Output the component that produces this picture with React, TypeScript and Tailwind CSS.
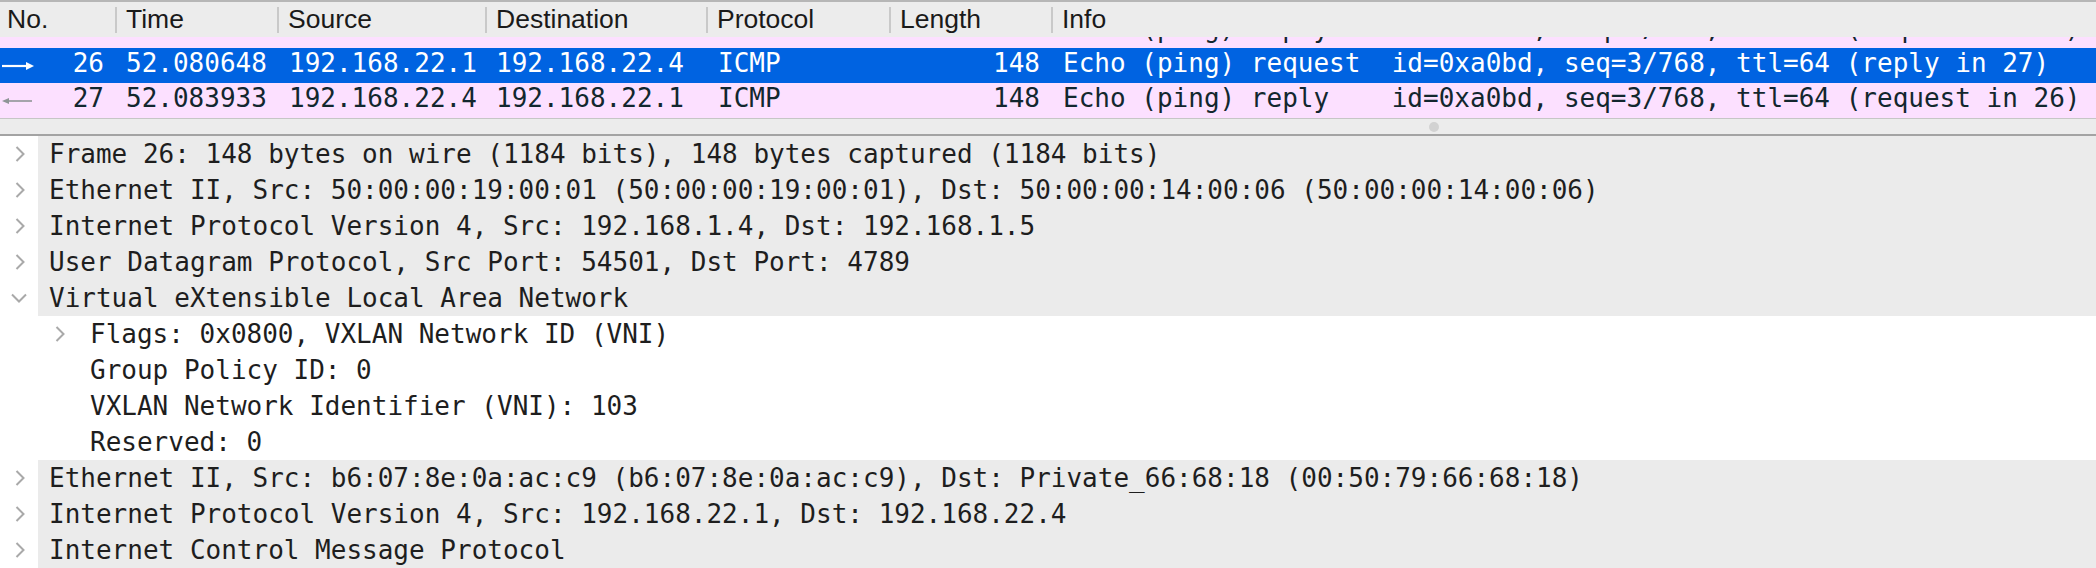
import React from "react";

const mono = "font-['DejaVu_Sans_Mono','Liberation_Mono',monospace] text-[26px] whitespace-pre";

type Packet = {
  no: string;
  time: string;
  src: string;
  dst: string;
  proto: string;
  len: string;
  info: string;
  dir?: "out" | "in";
  selected?: boolean;
};

const packets: Packet[] = [
  {
    no: "25",
    time: "52.079872",
    src: "192.168.22.4",
    dst: "192.168.22.1",
    proto: "ICMP",
    len: "148",
    info: "Echo (ping) reply    id=0xa0bd, seq=2/512, ttl=64 (request in 24)",
  },
  {
    no: "26",
    time: "52.080648",
    src: "192.168.22.1",
    dst: "192.168.22.4",
    proto: "ICMP",
    len: "148",
    info: "Echo (ping) request  id=0xa0bd, seq=3/768, ttl=64 (reply in 27)",
    dir: "out",
    selected: true,
  },
  {
    no: "27",
    time: "52.083933",
    src: "192.168.22.4",
    dst: "192.168.22.1",
    proto: "ICMP",
    len: "148",
    info: "Echo (ping) reply    id=0xa0bd, seq=3/768, ttl=64 (request in 26)",
    dir: "in",
  },
];

type Detail = {
  text: string;
  level: 0 | 1;
  chevron?: "closed" | "open";
};

const details: Detail[] = [
  { text: "Frame 26: 148 bytes on wire (1184 bits), 148 bytes captured (1184 bits)", level: 0, chevron: "closed" },
  { text: "Ethernet II, Src: 50:00:00:19:00:01 (50:00:00:19:00:01), Dst: 50:00:00:14:00:06 (50:00:00:14:00:06)", level: 0, chevron: "closed" },
  { text: "Internet Protocol Version 4, Src: 192.168.1.4, Dst: 192.168.1.5", level: 0, chevron: "closed" },
  { text: "User Datagram Protocol, Src Port: 54501, Dst Port: 4789", level: 0, chevron: "closed" },
  { text: "Virtual eXtensible Local Area Network", level: 0, chevron: "open" },
  { text: "Flags: 0x0800, VXLAN Network ID (VNI)", level: 1, chevron: "closed" },
  { text: "Group Policy ID: 0", level: 1 },
  { text: "VXLAN Network Identifier (VNI): 103", level: 1 },
  { text: "Reserved: 0", level: 1 },
  { text: "Ethernet II, Src: b6:07:8e:0a:ac:c9 (b6:07:8e:0a:ac:c9), Dst: Private_66:68:18 (00:50:79:66:68:18)", level: 0, chevron: "closed" },
  { text: "Internet Protocol Version 4, Src: 192.168.22.1, Dst: 192.168.22.4", level: 0, chevron: "closed" },
  { text: "Internet Control Message Protocol", level: 0, chevron: "closed" },
];

function DirArrow({ dir }: { dir?: "out" | "in" }) {
  if (dir === "out") {
    return (
      <svg width="32" height="12" viewBox="0 0 32 12" className="shrink-0">
        <line x1="0" y1="6" x2="26" y2="6" stroke="#ffffff" strokeWidth="2.2" />
        <polygon points="24,2 32,6 24,10" fill="#ffffff" />
      </svg>
    );
  }
  if (dir === "in") {
    return (
      <svg width="30" height="12" viewBox="0 0 30 12" className="shrink-0">
        <line x1="4" y1="6" x2="30" y2="6" stroke="#8f9597" strokeWidth="1.6" />
        <polygon points="0,6 7,3 7,9" fill="#8f9597" />
      </svg>
    );
  }
  return <span className="w-[32px] shrink-0" />;
}

function Chevron({ open }: { open?: boolean }) {
  if (open) {
    return (
      <svg width="16" height="10" viewBox="0 0 16 10">
        <path d="M1 1.5 L8 8.5 L15 1.5" fill="none" stroke="#a9a9a9" strokeWidth="2" />
      </svg>
    );
  }
  return (
    <svg width="10" height="16" viewBox="0 0 10 16">
      <path d="M1.5 1 L8.5 8 L1.5 15" fill="none" stroke="#a9a9a9" strokeWidth="2" />
    </svg>
  );
}

function HeaderCell({ label, width, first }: { label: string; width?: string; first?: boolean }) {
  return (
    <div className={`flex items-center h-full ${width ?? "flex-1"}`}>
      {!first && <span className="w-[2px] h-[26px] bg-[#c9c9c9] shrink-0" />}
      <span className={first ? "pl-[7px]" : "pl-[9px]"}>{label}</span>
    </div>
  );
}

function PacketRow({ p }: { p: Packet }) {
  const tone = p.selected ? "bg-[#0063e1] text-white" : "bg-[#fce0ff] text-[#12272e]";
  return (
    <div className={`flex items-center h-[35px] pb-[5px] shrink-0 ${tone} ${mono}`}>
      <div className="w-[115px] flex items-center justify-between pl-[2px] pr-[11px]">
        <span className="pt-[5px] flex items-center">
          <DirArrow dir={p.dir} />
        </span>
        <span>{p.no}</span>
      </div>
      <div className="w-[162px] pl-[11px]">{p.time}</div>
      <div className="w-[208px] pl-[12px]">{p.src}</div>
      <div className="w-[221px] pl-[11px]">{p.dst}</div>
      <div className="w-[183px] pl-[12px]">{p.proto}</div>
      <div className="w-[162px] pr-[11px] text-right">{p.len}</div>
      <div className="flex-1 pl-[12px]">{p.info}</div>
    </div>
  );
}

function DetailRow({ d }: { d: Detail }) {
  if (d.level === 0) {
    return (
      <div className="flex h-[36px]">
        <div className={`w-[38px] flex items-center shrink-0 ${d.chevron === "open" ? "pl-[11px]" : "pl-[15px]"}`}>
          {d.chevron && <Chevron open={d.chevron === "open"} />}
        </div>
        <div className={`flex-1 flex items-center bg-[#ebebeb] pl-[11px] text-[#1e1e1e] ${mono}`}>{d.text}</div>
      </div>
    );
  }
  return (
    <div className="flex h-[36px] items-center pl-[55px]">
      <div className="w-[35px] flex items-center shrink-0">{d.chevron && <Chevron />}</div>
      <div className={`text-[#1e1e1e] ${mono}`}>{d.text}</div>
    </div>
  );
}

export default function App() {
  return (
    <div className="w-[2096px] h-[568px] overflow-hidden bg-white flex flex-col">
      {/* packet list header */}
      <div className="relative z-10 flex items-center h-[37px] shrink-0 border-t-[2px] border-[#b6b6b6] bg-[#ececec] text-[#1a1a1a] font-['Liberation_Sans',Arial,sans-serif] text-[26.5px]">
        <HeaderCell label="No." width="w-[115px]" first />
        <HeaderCell label="Time" width="w-[162px]" />
        <HeaderCell label="Source" width="w-[208px]" />
        <HeaderCell label="Destination" width="w-[221px]" />
        <HeaderCell label="Protocol" width="w-[183px]" />
        <HeaderCell label="Length" width="w-[162px]" />
        <HeaderCell label="Info" />
      </div>

      {/* packet list, scrolled so row 25 is mostly hidden */}
      <div className="h-[81px] shrink-0 overflow-hidden flex flex-col">
        <div className="-mt-[24px] flex flex-col">
          {packets.map((p) => (
            <PacketRow key={p.no} p={p} />
          ))}
        </div>
      </div>

      {/* splitter */}
      <div className="h-[18px] shrink-0 bg-[#ececec] border-t border-[#c6c6c6] border-b-[2px] border-b-[#a3a3a3] flex items-center">
        <span className="ml-[1429px] w-[10px] h-[10px] rounded-full bg-[#d2d2d2]" />
      </div>

      {/* packet details */}
      <div className="flex flex-col">
        {details.map((d, i) => (
          <DetailRow key={i} d={d} />
        ))}
      </div>
    </div>
  );
}
